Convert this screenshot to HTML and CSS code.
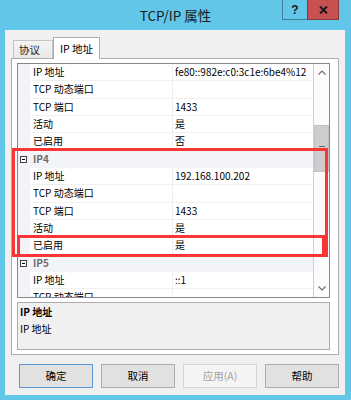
FILE: index.html
```html
<!DOCTYPE html>
<html lang="zh-CN">
<head>
    <meta charset="UTF-8">
    <title>TCP/IP 属性</title>
    <link rel="stylesheet" href="styles.css">
</head>
<body>
    <div class="window">
        <div class="titlebar">
            <span class="title">TCP/IP 属性</span>
            <div class="caption-buttons">
                <div class="cap help">?</div>
                <div class="cap close">
                    <svg width="9" height="8" viewBox="0 0 9 8"><path d="M1 0.5 L8 7.5 M8 0.5 L1 7.5" stroke="#1a1a1a" stroke-width="2"/></svg>
                </div>
            </div>
        </div>
        <div class="dialog">
            <div class="tabs">
                <div class="tab">协议</div>
                <div class="tab active">IP 地址</div>
            </div>
            <div class="page">
                <div class="grid">
                    <div class="rows">
                        <div class="row"><span class="gutter"></span><span class="name">IP 地址</span><span class="value">fe80::982e:c0:3c1e:6be4%12</span></div>
                        <div class="row"><span class="gutter"></span><span class="name">TCP 动态端口</span><span class="value"></span></div>
                        <div class="row"><span class="gutter"></span><span class="name">TCP 端口</span><span class="value">1433</span></div>
                        <div class="row"><span class="gutter"></span><span class="name">活动</span><span class="value">是</span></div>
                        <div class="row"><span class="gutter"></span><span class="name">已启用</span><span class="value">否</span></div>
                        <div class="row cat"><span class="gutter"><i class="toggle"></i></span><span class="cat-name">IP4</span></div>
                        <div class="row"><span class="gutter"></span><span class="name">IP 地址</span><span class="value">192.168.100.202</span></div>
                        <div class="row"><span class="gutter"></span><span class="name">TCP 动态端口</span><span class="value"></span></div>
                        <div class="row"><span class="gutter"></span><span class="name">TCP 端口</span><span class="value">1433</span></div>
                        <div class="row"><span class="gutter"></span><span class="name">活动</span><span class="value">是</span></div>
                        <div class="row"><span class="gutter"></span><span class="name">已启用</span><span class="value">是</span></div>
                        <div class="row cat"><span class="gutter"><i class="toggle"></i></span><span class="cat-name">IP5</span></div>
                        <div class="row"><span class="gutter"></span><span class="name">IP 地址</span><span class="value">::1</span></div>
                        <div class="row"><span class="gutter"></span><span class="name">TCP 动态端口</span><span class="value"></span></div>
                    </div>
                    <div class="vscroll">
                        <div class="arrow">
                            <svg width="8" height="5" viewBox="0 0 8 5"><path d="M0.5 4.5 L4 1 L7.5 4.5" fill="none" stroke="#707070" stroke-width="1.2"/></svg>
                        </div>
                        <div class="thumb"><i></i><i></i><i></i></div>
                        <div class="track"></div>
                        <div class="arrow">
                            <svg width="8" height="5" viewBox="0 0 8 5"><path d="M0.5 0.5 L4 4 L7.5 0.5" fill="none" stroke="#707070" stroke-width="1.2"/></svg>
                        </div>
                    </div>
                </div>
                <div class="desc">
                    <div class="desc-title">IP 地址</div>
                    <div class="desc-text">IP 地址</div>
                </div>
            </div>
            <div class="buttons">
                <button class="btn default">确定</button>
                <button class="btn">取消</button>
                <button class="btn" disabled>应用(A)</button>
                <button class="btn">帮助</button>
            </div>
        </div>
        <div class="mark mark-big"></div>
        <div class="mark mark-small"></div>
    </div>
</body>
</html>
```

FILE: styles.css
```css
body {
    margin: 0;
    font-family: "Noto Sans CJK SC", "Noto Sans", sans-serif;
    color: #000;
}
.window {
    position: relative;
    width: 351px;
    height: 400px;
    background-color: #62c6e8;
    overflow: hidden;
}
.titlebar {
    height: 30px;
    display: grid;
    grid-template-columns: 1fr auto 1fr;
    align-items: center;
}
.title {
    grid-column: 2;
    font-size: 13.5px;
    line-height: 30px;
    color: #1a1a1a;
}
.caption-buttons {
    grid-column: 3;
    justify-self: end;
    align-self: start;
    margin-right: 12px;
    display: flex;
}
.cap {
    height: 20px;
    box-sizing: border-box;
    display: flex;
    align-items: center;
    justify-content: center;
}
.help {
    width: 25px;
    background-color: #62c6e8;
    border: 1px solid #3d7f96;
    border-top: none;
    border-right: none;
    font-family: "Liberation Sans", sans-serif;
    font-weight: bold;
    font-size: 12px;
    color: #1a1a1a;
}
.close {
    width: 32px;
    background-color: #c75050;
    border: 1px solid #8a3a3a;
    border-top: none;
}
.dialog {
    margin: 0 6px 0 5px;
    height: 365px;
    box-sizing: border-box;
    padding-top: 7px;
    background-color: #f0f0f0;
}
.tabs {
    display: flex;
    align-items: flex-end;
    height: 21px;
    margin-left: 8px;
}
.tab {
    height: 18px;
    box-sizing: border-box;
    padding-left: 5px;
    width: 40px;
    font-size: 10.5px;
    line-height: 17px;
    color: #222;
    border: 1px solid #c4c4c4;
    border-bottom: none;
    background: linear-gradient(#f4f4f4, #e8e8e8);
}
.tab.active {
    position: relative;
    z-index: 1;
    width: 47px;
    height: 22px;
    margin-bottom: -1px;
    padding-left: 0;
    text-align: center;
    line-height: 21px;
    color: #000;
    background: #fff;
    border-color: #acacac;
    border-left-color: #acacac;
}
.page {
    margin-left: 6px;
    width: 328px;
    height: 297px;
    box-sizing: border-box;
    border: 1px solid #acacac;
    background-color: #fff;
    padding: 4px 0 4px 5px;
}
.grid {
    width: 313px;
    height: 235px;
    box-sizing: border-box;
    border: 1px solid #828790;
    display: flex;
}
.rows {
    width: 296px;
    overflow: hidden;
    font-size: 10px;
}
.row {
    display: grid;
    grid-template-columns: 12px 143px 1fr;
    height: 17.35px;
    line-height: 16px;
    white-space: nowrap;
}
.gutter {
    background-color: #f2f4f8;
}
.name {
    padding-left: 3px;
    border-right: 1px solid #eeeeee;
    border-bottom: 1px solid #f0f0f0;
    color: #000;
}
.value {
    padding-left: 2px;
    border-bottom: 1px solid #f0f0f0;
}
.row.cat {
    background-color: #f2f4f8;
}
.cat-name {
    grid-column: 2 / 4;
    padding-left: 3px;
    font-weight: bold;
    color: #6d6d6d;
}
.toggle {
    display: block;
    position: relative;
    width: 7px;
    height: 7px;
    margin: 5px 0 0 2px;
    border: 1px solid #404040;
    box-sizing: border-box;
    background: #fff;
}
.toggle::after {
    content: "";
    position: absolute;
    left: 1px;
    top: 2px;
    width: 3px;
    height: 1px;
    background: #000;
}
.vscroll {
    width: 15px;
    border-left: 1px solid #d0d0d0;
    background-color: #fbfbfb;
    display: flex;
    flex-direction: column;
}
.arrow {
    height: 17px;
    display: flex;
    align-items: center;
    justify-content: center;
}
.thumb {
    margin-top: 44px;
    height: 47px;
    box-sizing: border-box;
    background-color: #cdcdcd;
    border: 1px solid #c2c2c2;
    display: flex;
    flex-direction: column;
    align-items: center;
    justify-content: center;
    gap: 1px;
}
.thumb i {
    display: block;
    width: 6px;
    height: 1px;
    background-color: #6a6a6a;
}
.track {
    flex: 1;
}
.desc {
    margin-top: 4px;
    width: 313px;
    height: 48px;
    box-sizing: border-box;
    border: 1px solid #acacac;
    background-color: #f0f0f0;
    padding: 1px 2px 0;
    font-size: 10px;
    line-height: 16px;
}
.desc-title {
    font-weight: bold;
    margin-bottom: 1px;
}
.buttons {
    display: grid;
    grid-template-columns: repeat(4, 74px);
    column-gap: 8px;
    margin: 9px 0 0 14px;
}
.btn {
    height: 24px;
    padding: 0;
    font-family: "Noto Sans CJK SC", "Noto Sans", sans-serif;
    font-size: 10.5px;
    line-height: 20px;
    color: #000;
    background-color: #e1e1e1;
    border: 1px solid #adadad;
}
.btn.default {
    border-color: #5b9ad6;
}
.btn:disabled {
    color: #a3a3a3;
    background-color: #f4f4f4;
    border-color: #d5d5d5;
}
.mark {
    position: absolute;
    box-sizing: border-box;
    border: 3px solid #fb3535;
}
.mark-big {
    left: 12px;
    top: 148px;
    width: 316px;
    height: 109px;
}
.mark-small {
    left: 17px;
    top: 235px;
    width: 308px;
    height: 22px;
}
```
